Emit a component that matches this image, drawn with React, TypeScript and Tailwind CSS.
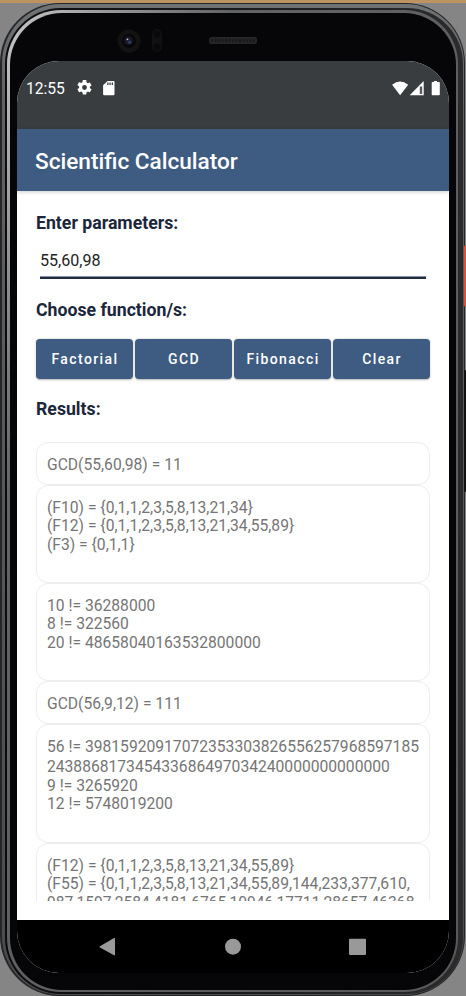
import React from "react";

const results: { lines: string[]; box: string }[] = [
  { lines: ["GCD(55,60,98) = 11"], box: "h-[43px]" },
  {
    lines: ["(F10) = {0,1,1,2,3,5,8,13,21,34}", "(F12) = {0,1,1,2,3,5,8,13,21,34,55,89}", "(F3) = {0,1,1}"],
    box: "h-[98px]",
  },
  { lines: ["10 != 36288000", "8 != 322560", "20 != 48658040163532800000"], box: "h-[98px]" },
  { lines: ["GCD(56,9,12) = 111"], box: "h-[43px]" },
  {
    lines: [
      "56 != 39815920917072353303826556257968597185",
      "243886817345433686497034240000000000000",
      "9 != 3265920",
      "12 != 5748019200",
    ],
    box: "h-[119px] [&>div:first-child]:mb-[2px]",
  },
  {
    lines: [
      "(F12) = {0,1,1,2,3,5,8,13,21,34,55,89}",
      "(F55) = {0,1,1,2,3,5,8,13,21,34,55,89,144,233,377,610,",
      "987,1597,2584,4181,6765,10946,17711,28657,46368",
    ],
    box: "h-[119px]",
  },
];

function StatusBar() {
  return (
    <div className="flex h-[68px] shrink-0 items-start bg-[#3a3d40] pr-[7px] pl-[9px] pt-[17px] text-white">
      <span className="w-[51px] text-[15.6px] leading-[22px]">12:55</span>
      <svg className="mt-[2px] h-[15px] w-[15px]" viewBox="2 2 20 20" fill="currentColor">
        <path d="M19.14 12.94c.04-.3.06-.61.06-.94s-.02-.64-.07-.94l2.03-1.58a.49.49 0 0 0 .12-.61l-1.92-3.32a.49.49 0 0 0-.59-.22l-2.39.96a7 7 0 0 0-1.62-.94l-.36-2.54A.48.48 0 0 0 13.92 2h-3.84a.47.47 0 0 0-.47.41l-.36 2.54c-.59.24-1.13.57-1.62.94l-2.39-.96a.48.48 0 0 0-.59.22L2.74 8.47a.47.47 0 0 0 .12.61l2.03 1.58c-.05.3-.09.63-.09.94s.02.64.07.94l-2.03 1.58a.49.49 0 0 0-.12.61l1.92 3.32c.12.22.37.29.59.22l2.39-.96c.5.38 1.03.7 1.62.94l.36 2.54c.05.24.24.41.48.41h3.84c.24 0 .44-.17.47-.41l.36-2.54a7 7 0 0 0 1.62-.94l2.39.96c.22.08.47 0 .59-.22l1.92-3.32a.47.47 0 0 0-.12-.61zM12 15.200A3.200 3.200 0 1 1 12 8.800a3.200 3.200 0 0 1 0 6.400z" />
      </svg>
      <svg className="mt-[3px] ml-[11px] h-[15px] w-[13px]" viewBox="0 0 13 15">
        <path d="M4.600 0H10.500a1 1 0 0 1 1 1v12.300a1 1 0 0 1-1 1H1.100a1 1 0 0 1-1-1V4.300z" fill="white" />
        <path d="M4.200 1.500h1.300v2.500H4.200zM6.400 1.500h1.300v2.500H6.400zM8.700 1.500h1.300v2.500H8.700z" fill="#3a3d40" />
      </svg>
      <svg className="mt-[2px] ml-auto h-4 w-[50px]" viewBox="0 0 50 16">
        <path d="M.100 4.700Q8 -1.900 16.200 4.700L8.100 15.200z" fill="white" />
        <path d="M31.700 1v14.200H17.700z" fill="white" />
        <path d="M27.800 6.500h2.400v7.500h-2.400z" fill="#3a3d40" opacity=".85" />
        <path d="M42 1h3v1h2a.8.8 0 0 1 .8.8v11.700a.8.8 0 0 1-.8.8h-6.500a.8.8 0 0 1-.8-.8V2.800a.8.8 0 0 1 .8-.8H42z" fill="white" />
      </svg>
    </div>
  );
}

function FunctionButton({ label }: { label: string }) {
  return (
    <button className="h-[40px] flex-1 rounded-[4px] bg-[#3e5c81] pl-[1px] text-center text-[14px] font-medium tracking-[1.4px] text-white shadow-[0_0.5px_2px_rgba(0,0,0,0.3)]">
      {label}
    </button>
  );
}

function Camera() {
  return (
    <svg className="absolute top-[20px] left-[110px] h-[44px] w-[160px]" viewBox="0 0 160 44">
      <circle cx="19" cy="21" r="11.500" fill="#121213" />
      <circle cx="19" cy="21" r="7" fill="#07080b" />
      <circle cx="18.500" cy="20.500" r="4" fill="#191c27" />
      <circle cx="19.700" cy="22.300" r="1.700" fill="#303c66" />
      <circle cx="17.500" cy="19.300" r=".900" fill="#c5c8d4" />
      <rect x="42" y="9" width="10" height="23" rx="5" fill="#111112" />
      <circle cx="47" cy="14" r="3.500" fill="#09090a" />
      <circle cx="47" cy="27" r="3.500" fill="#09090a" />
      <rect x="99" y="17" width="48" height="7" rx="2" fill="#252525" />
      <path d="M101 20.500h44" stroke="#191919" strokeWidth="3" strokeDasharray="2 1.500" />
    </svg>
  );
}

export default function App() {
  return (
    <div className="relative h-[996px] w-[466px] overflow-hidden bg-[#858585] font-['Roboto',sans-serif]">
      <div className="h-[3px] bg-[#bd9362]" />
      <div className="h-[993px] w-[465px] rounded-[60px] bg-[#252628] pt-[1px] pr-[1px] pb-[1px] pl-[2px]">
        <div className="h-full rounded-[59px] bg-linear-to-b from-[#6f7375] via-[#606164] via-10% to-[#4a4b4d] pt-[4px] pr-[1px] pb-[1px] pl-[3px]">
          <div className="h-full rounded-[56px] bg-linear-to-r from-[#0c0c0d] to-[#2b2b2c] pt-[2px] pr-[5px] pb-[2px] pl-[2px]">
            <div className="h-full rounded-[54px] bg-linear-to-br from-[#c8c8c8] via-[#626366] via-25% to-[#58585a] pt-[3px] pr-[2px] pb-[2px] pl-[3px]">
              <div className="h-full rounded-[52px] bg-[#060608] px-[7px] pt-[48px]">
                <div className="flex h-[912px] w-[432px] flex-col overflow-hidden rounded-[42px] bg-white">
                  <StatusBar />
                  <header className="z-10 flex h-[62px] shrink-0 items-center bg-[#3e5c81] pl-[18px] pt-[4px] shadow-[0_1px_4px_rgba(0,0,0,0.2)]">
                    <h1 className="text-[22.6px] font-medium text-white">Scientific Calculator</h1>
                  </header>
                  <main className="h-[729px] shrink-0 bg-white px-[19px] pt-[21px]">
                    <h2 className="text-[17.7px] leading-[22px] font-bold text-[#1b263b]">Enter parameters:</h2>
                    <div className="mx-[4px] mt-[16px] h-[29px] border-b-2 border-[#1f2b42] text-[16.1px] leading-[22px] text-[#222] shadow-[inset_0_-1px_0_#8b93a3]">
                      55,60,98
                    </div>
                    <h2 className="mt-[20px] text-[17.7px] leading-[22px] font-bold text-[#1b263b]">Choose function/s:</h2>
                    <div className="mt-[18px] flex gap-[2px]">
                      <FunctionButton label="Factorial" />
                      <FunctionButton label="GCD" />
                      <FunctionButton label="Fibonacci" />
                      <FunctionButton label="Clear" />
                    </div>
                    <h2 className="mt-[19px] text-[17.7px] leading-[22px] font-bold text-[#1b263b]">Results:</h2>
                    <div className="mt-[22px] h-[459px] overflow-hidden">
                      {results.map((result, i) => (
                        <div
                          key={i}
                          className={`${result.box} rounded-[12px] border border-[#ededed] px-[10px] pt-[13px] text-[15.65px] leading-[18.4px] whitespace-nowrap text-[#757575]`}
                        >
                          {result.lines.map((line, n) => (
                            <div key={n}>{line}</div>
                          ))}
                        </div>
                      ))}
                    </div>
                  </main>
                  <nav className="flex h-[53px] shrink-0 bg-black pt-[18px] pl-[82px]">
                    <svg className="h-[18px] w-[270px]" viewBox="0 0 270 18" fill="#999">
                      <path d="M1 8.300 15 0q1-.3 1 1v15.500q0 1.300-1 .800L1 9.600q-1-.700 0-1.300z" />
                      <circle cx="134" cy="8.700" r="8" />
                      <rect x="250" y=".700" width="17" height="16.300" rx="1" />
                    </svg>
                  </nav>
                </div>
              </div>
            </div>
          </div>
        </div>
      </div>
      <div className="absolute top-[245px] right-0 h-[62px] w-[2px] rounded-l bg-[#d3553c]" />
      <div className="absolute top-[370px] right-0 h-[122px] w-[2px] rounded-l bg-[#111112]" />
      <Camera />
    </div>
  );
}
